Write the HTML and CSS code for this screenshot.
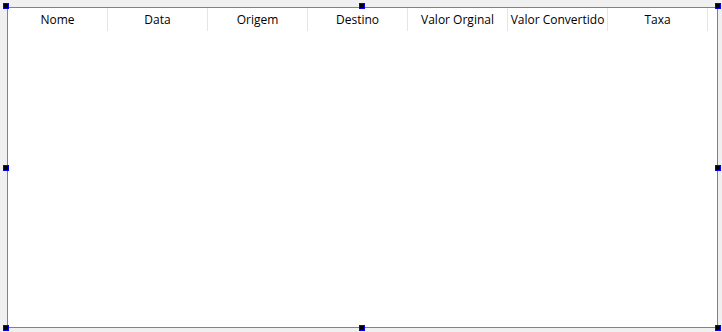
FILE: index.html
```html
<!DOCTYPE html>
<html lang="pt">
<head>
    <meta charset="UTF-8">
    <title>Conversões</title>
    <link rel="stylesheet" href="styles.css">
</head>
<body>

<div class="designer">
    <div class="grid">
        <div class="header">
            <div class="col">Nome</div>
            <div class="col">Data</div>
            <div class="col">Origem</div>
            <div class="col">Destino</div>
            <div class="col">Valor Orginal</div>
            <div class="col">Valor Convertido</div>
            <div class="col">Taxa</div>
        </div>

        <!-- alças de seleção -->
        <span class="handle h-tl"></span>
        <span class="handle h-tm"></span>
        <span class="handle h-tr"></span>
        <span class="handle h-ml"></span>
        <span class="handle h-mr"></span>
        <span class="handle h-bl"></span>
        <span class="handle h-bm"></span>
        <span class="handle h-br"></span>
    </div>
</div>

</body>
</html>
```

FILE: styles.css
```css
html, body {
    margin: 0;
    background-color: #f0f0f0;
}
body {
    font-family: "Open Sans", "Noto Sans", Arial, sans-serif;
    font-size: 12px;
    color: #000;
}
.designer {
    padding: 7px;
}
.grid {
    position: relative;
    width: 709px;
    height: 319px;
    border: 1px solid #828282;
    background-color: #fff;
}
.header {
    display: flex;
    height: 23px;
}
.col {
    width: 99px;
    border-right: 1px solid #e5e5e5;
    display: flex;
    align-items: center;
    justify-content: center;
    white-space: nowrap;
    padding-bottom: 1px;
}
.handle {
    position: absolute;
    width: 4px;
    height: 4px;
    background-color: #000;
    border: 1px solid #0000ff;
}
.h-tl { left: -5px; top: -5px; }
.h-tm { left: 351px; top: -5px; }
.h-tr { left: 707px; top: -5px; }
.h-ml { left: -5px; top: 157px; }
.h-mr { left: 707px; top: 157px; }
.h-bl { left: -5px; top: 317px; }
.h-bm { left: 351px; top: 317px; }
.h-br { left: 707px; top: 317px; }
```
